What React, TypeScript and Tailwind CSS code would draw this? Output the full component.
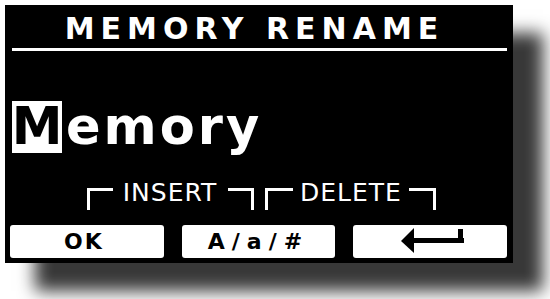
export default function App() {
  return (
    <div className="h-[299px] w-[550px] overflow-hidden bg-white pl-[5px] pt-[5px]">
      <div className="flex h-[258px] w-[508px] flex-col bg-black pb-[5px] pl-[5px] pr-[6px] pt-[9px] font-['DejaVu_Sans',sans-serif] text-white shadow-[30px_28px_16px_rgba(0,0,0,0.78)]">
        {/* title */}
        <div className="pr-[8px] text-center text-[30px] font-bold leading-[30px] tracking-[6px]">
          MEMORY RENAME
        </div>
        <div className="ml-[2px] mt-[4px] h-[3px] bg-white" />

        {/* name being edited */}
        <div className="ml-[2px] mt-[50px] flex text-[51px] font-bold leading-[52px]">
          <span className="inline-flex h-[52px] w-[50px] justify-center bg-white text-black">M</span>
          <span className="ml-[4px] tracking-[3px]">emory</span>
        </div>

        {/* function labels */}
        <div className="mt-[27px] flex h-[30px] items-start pl-[77px] text-[25px] leading-[25px]">
          <div className="mt-[8px] h-[22px] w-[26px] border-l-[3px] border-t-[3px] border-white" />
          <div className="ml-[9px] w-[96px] text-center tracking-[1px]">INSERT</div>
          <div className="ml-[10px] mt-[8px] h-[22px] w-[26px] border-r-[3px] border-t-[3px] border-white" />
          <div className="ml-[11px] mt-[8px] h-[22px] w-[28px] border-l-[3px] border-t-[3px] border-white" />
          <div className="ml-[7px] w-[100px] text-center tracking-[1px]">DELETE</div>
          <div className="ml-[9px] mt-[8px] h-[22px] w-[27px] border-r-[3px] border-t-[3px] border-white" />
        </div>

        {/* soft buttons */}
        <div className="mt-[15px] grid h-[33px] grid-cols-3 gap-[18px] text-black">
          <div className="flex items-center justify-center rounded-[3px] bg-white pr-[6px] text-[22px] font-bold leading-none tracking-[2px]">
            OK
          </div>
          <div className="flex items-center justify-center rounded-[3px] bg-white text-[22px] font-bold leading-none tracking-[7px]">
            A/a/#
          </div>
          <div className="flex items-center rounded-[3px] bg-white pl-[48px]">
            <svg width="63" height="25" viewBox="0 0 63 25" className="mt-[-2px]">
              <polygon points="0,13 13,0 13,25" fill="black" />
              <rect x="12" y="10" width="51" height="5" fill="black" />
              <rect x="57" y="1" width="5" height="14" fill="black" />
            </svg>
          </div>
        </div>
      </div>
    </div>
  );
}
